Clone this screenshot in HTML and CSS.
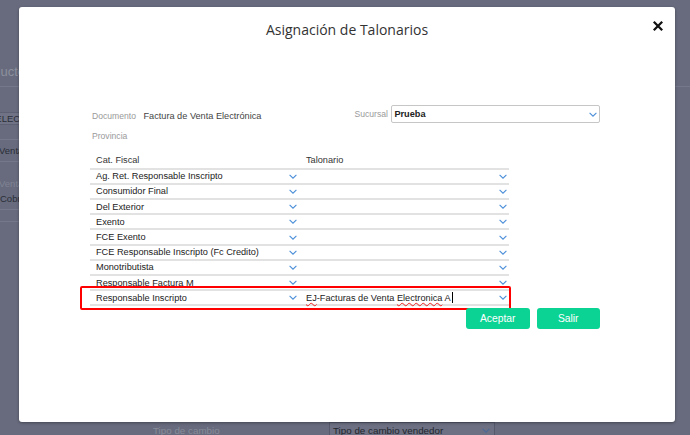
FILE: index.html
```html
<!DOCTYPE html>
<html lang="es">
    <head>
        <meta charset="UTF-8" />
        <meta name="viewport" content="width=device-width, initial-scale=1.0" />
        <title>Asignación de Talonarios</title>
        <link rel="stylesheet" href="styles.css">
    </head>
    <body>
        <!-- pagina de fondo (detras del modal) -->
        <div class="page">
            <div class="page-top">
                <h2 class="side-tit">Productos</h2>
            </div>
            <div class="side">
                <div class="side-sel">SELECCIONAR</div>
                <div class="side-box">Ventas</div>
                <div class="side-lbl">Ventas</div>
                <div class="side-box2">Cobranzas</div>
                <div class="side-line"></div>
            </div>
            <div class="cambio">
                <span class="cambio-lbl">Tipo de cambio</span>
                <div class="cambio-sel">
                    Tipo de cambio vendedor
                    <svg class="chev chev-dim" viewBox="0 0 8 5"><path d="M0.6 0.8 4 4.2 7.4 0.8" /></svg>
                </div>
            </div>
        </div>

        <!-- modal Asignacion de talonarios -->
        <div class="modal">
            <div class="modal-head">
                <h1 class="modal-tit">Asignación de Talonarios</h1>
                <button class="btn-close" type="button">
                    <svg viewBox="0 0 10 10"><path d="M1.5 1.5 8.5 8.5 M8.5 1.5 1.5 8.5" /></svg>
                </button>
            </div>

            <div class="modal-body">
                <!-- documento / sucursal -->
                <div class="info">
                    <div class="info-doc">
                        <span class="lbl">Documento</span>
                        <span class="val">Factura de Venta Electrónica</span>
                    </div>
                    <span class="lbl lbl-suc">Sucursal</span>
                    <div class="sel-suc">
                        Prueba
                        <svg class="chev" viewBox="0 0 8 5"><path d="M0.6 0.8 4 4.2 7.4 0.8" /></svg>
                    </div>
                </div>
                <div class="info-prov"><span class="lbl">Provincia</span></div>

                <!-- tabla cat. fiscal / talonario -->
                <div class="tabla">
                    <div class="tabla-head">
                        <div class="col">Cat. Fiscal</div>
                        <div class="col">Talonario</div>
                    </div>
                    <div class="fila">
                        <div class="col">Ag. Ret. Responsable Inscripto<svg class="chev" viewBox="0 0 8 5"><path d="M0.6 0.8 4 4.2 7.4 0.8" /></svg></div>
                        <div class="col"><svg class="chev" viewBox="0 0 8 5"><path d="M0.6 0.8 4 4.2 7.4 0.8" /></svg></div>
                    </div>
                    <div class="fila">
                        <div class="col">Consumidor Final<svg class="chev" viewBox="0 0 8 5"><path d="M0.6 0.8 4 4.2 7.4 0.8" /></svg></div>
                        <div class="col"><svg class="chev" viewBox="0 0 8 5"><path d="M0.6 0.8 4 4.2 7.4 0.8" /></svg></div>
                    </div>
                    <div class="fila">
                        <div class="col">Del Exterior<svg class="chev" viewBox="0 0 8 5"><path d="M0.6 0.8 4 4.2 7.4 0.8" /></svg></div>
                        <div class="col"><svg class="chev" viewBox="0 0 8 5"><path d="M0.6 0.8 4 4.2 7.4 0.8" /></svg></div>
                    </div>
                    <div class="fila">
                        <div class="col">Exento<svg class="chev" viewBox="0 0 8 5"><path d="M0.6 0.8 4 4.2 7.4 0.8" /></svg></div>
                        <div class="col"><svg class="chev" viewBox="0 0 8 5"><path d="M0.6 0.8 4 4.2 7.4 0.8" /></svg></div>
                    </div>
                    <div class="fila">
                        <div class="col">FCE Exento<svg class="chev" viewBox="0 0 8 5"><path d="M0.6 0.8 4 4.2 7.4 0.8" /></svg></div>
                        <div class="col"><svg class="chev" viewBox="0 0 8 5"><path d="M0.6 0.8 4 4.2 7.4 0.8" /></svg></div>
                    </div>
                    <div class="fila">
                        <div class="col">FCE Responsable Inscripto (Fc Credito)<svg class="chev" viewBox="0 0 8 5"><path d="M0.6 0.8 4 4.2 7.4 0.8" /></svg></div>
                        <div class="col"><svg class="chev" viewBox="0 0 8 5"><path d="M0.6 0.8 4 4.2 7.4 0.8" /></svg></div>
                    </div>
                    <div class="fila">
                        <div class="col">Monotributista<svg class="chev" viewBox="0 0 8 5"><path d="M0.6 0.8 4 4.2 7.4 0.8" /></svg></div>
                        <div class="col"><svg class="chev" viewBox="0 0 8 5"><path d="M0.6 0.8 4 4.2 7.4 0.8" /></svg></div>
                    </div>
                    <div class="fila">
                        <div class="col">Responsable Factura M<svg class="chev" viewBox="0 0 8 5"><path d="M0.6 0.8 4 4.2 7.4 0.8" /></svg></div>
                        <div class="col"><svg class="chev" viewBox="0 0 8 5"><path d="M0.6 0.8 4 4.2 7.4 0.8" /></svg></div>
                    </div>
                    <!-- fila marcada en rojo -->
                    <div class="marca">
                        <div class="fila fila-sel">
                            <div class="col">Responsable Inscripto<svg class="chev" viewBox="0 0 8 5"><path d="M0.6 0.8 4 4.2 7.4 0.8" /></svg></div>
                            <div class="col">
                                <span><span class="typo">EJ</span>-Facturas de Venta <span class="typo">Electronica</span> A<span class="caret"></span></span>
                                <svg class="chev" viewBox="0 0 8 5"><path d="M0.6 0.8 4 4.2 7.4 0.8" /></svg>
                            </div>
                        </div>
                    </div>
                </div>

                <!-- botones -->
                <div class="acciones">
                    <button class="btn" type="button">Aceptar</button>
                    <button class="btn" type="button">Salir</button>
                </div>
            </div>
        </div>
    </body>
</html>
```

FILE: styles.css
```css
body {
    margin: 0;
    height: 435px;
    overflow: hidden;
    background: #676b7d;
    font-family: "Liberation Sans", Arial, sans-serif;
}

/* pagina de fondo */
.page {
    height: 435px;
    display: flex;
    flex-direction: column;
}
.page-top {
    height: 86px;
    border-bottom: 1px solid #74788a;
}
.side-tit {
    margin: 0;
    padding-top: 64px;
    margin-left: -27px;
    font-size: 13px;
    line-height: 16px;
    font-weight: normal;
    color: #8c909d;
}
.side {
    margin-left: -14px;
    width: 120px;
}
.side-sel {
    margin-top: 25px;
    height: 11px;
    line-height: 11px;
    background: #6f7385;
    border: 1px solid #5c6072;
    font-size: 9.5px;
    color: #2a2d38;
    padding-left: 2px;
}
.side-box {
    margin-top: 14px;
    height: 21px;
    line-height: 21px;
    border-top: 1px solid #74788a;
    border-bottom: 1px solid #74788a;
    font-size: 9.5px;
    color: #2a2d38;
    padding-left: 13px;
}
.side-lbl {
    margin-top: 15px;
    font-size: 9.5px;
    line-height: 14px;
    color: #7f8393;
    padding-left: 13px;
}
.side-box2 {
    height: 12px;
    line-height: 12px;
    padding: 2px 0 4px 14px;
    border-bottom: 1px solid #74788a;
    font-size: 9.5px;
    color: #2a2d38;
}
.side-line {
    height: 11px;
    border-bottom: 1px solid #74788a;
}
.cambio {
    display: flex;
    align-items: flex-start;
    flex: none;
    height: 13px;
    margin-top: auto;
    padding-left: 153px;
    font-size: 9.8px;
}
.cambio-lbl {
    width: 176px;
    line-height: 17px;
    color: #878b99;
}
.cambio-sel {
    width: 166px;
    height: 17px;
    box-sizing: border-box;
    padding: 0 4px 0 3px;
    display: flex;
    align-items: center;
    justify-content: space-between;
    background: #6c7082;
    border: 1px solid #55596b;
    color: #23262e;
}

/* modal */
.modal {
    position: absolute;
    top: 7px;
    left: 19px;
    width: 656px;
    height: 415px;
    background: #fff;
    border-radius: 3px;
    box-shadow: 0 1px 3px rgba(0, 0, 0, 0.35);
}
.modal-head {
    position: relative;
    height: 46px;
    text-align: center;
}
.modal-tit {
    margin: 0;
    font-family: "Open Sans", sans-serif;
    font-size: 14px;
    font-weight: normal;
    line-height: 46px;
    color: #333;
}
.btn-close {
    position: absolute;
    top: 13px;
    right: 11px;
    width: 12px;
    height: 12px;
    padding: 0;
    border: 0;
    background: none;
}
.btn-close svg {
    display: block;
    width: 12px;
    height: 12px;
    stroke: #111;
    stroke-width: 1.9;
    fill: none;
}
.modal-body {
    width: 510px;
    padding: 52px 0 0 71px;
}

/* documento / sucursal */
.info {
    display: flex;
    align-items: center;
    height: 18px;
    padding-left: 2px;
}
.info-doc {
    width: 263px;
}
.lbl {
    font-size: 8.6px;
    color: #9a9a9a;
}
.val {
    margin-left: 3px;
    font-size: 9.2px;
    color: #444;
}
.lbl-suc {
    width: 37px;
}
.sel-suc {
    width: 209px;
    height: 18px;
    box-sizing: border-box;
    padding: 0 2px 0 2px;
    display: flex;
    align-items: center;
    justify-content: space-between;
    border: 1px solid #c6c6c6;
    border-radius: 2px;
    font-size: 9.2px;
    font-weight: bold;
    color: #222;
}
.info-prov {
    margin-top: 2px;
    height: 18px;
    line-height: 18px;
    padding-left: 2px;
}

/* tabla */
.tabla {
    width: 419px;
    margin-top: 10px;
}
.tabla-head {
    display: flex;
    height: 14.7px;
    line-height: 14.7px;
    font-size: 9.2px;
    color: #333;
}
.col {
    width: 210px;
    box-sizing: border-box;
    padding: 0 3px 0 6px;
    display: flex;
    align-items: center;
    white-space: nowrap;
}
.col + .col {
    width: 209px;
    padding-right: 2px;
}
.col .chev {
    margin-left: auto;
}
.fila {
    display: flex;
    height: 13.2px;
    border-top: 2px solid #e2e2e2;
    font-size: 9.2px;
    color: #222;
}
.fila-sel {
    border-bottom: 2px solid #e2e2e2;
}
.chev {
    width: 8px;
    height: 5px;
    flex: none;
    fill: none;
    stroke: #4c8fd8;
    stroke-width: 1.1;
}
.chev-dim {
    stroke: #4d6896;
}
/* marca roja sobre la fila */
.marca {
    position: relative;
    margin: -3.6px -2px 0 -10px;
    padding: 1.6px 0 2px 8px;
    border: 2px solid #f00;
    border-radius: 2px;
    background: #fff;
}
.typo {
    text-decoration: underline wavy #e22;
    text-decoration-thickness: 1px;
    text-underline-offset: 1px;
}
.caret {
    display: inline-block;
    width: 1px;
    height: 11px;
    margin-left: 1px;
    background: #000;
    vertical-align: -2px;
}

/* botones */
.acciones {
    position: relative;
    display: flex;
    justify-content: flex-end;
    gap: 7px;
    margin-top: -2.7px;
}
.btn {
    width: 63.5px;
    height: 21px;
    padding: 0;
    border: 0;
    border-radius: 3px;
    background: #0bd394;
    color: #fff;
    font-family: "Liberation Sans", Arial, sans-serif;
    font-size: 10.3px;
}
```
